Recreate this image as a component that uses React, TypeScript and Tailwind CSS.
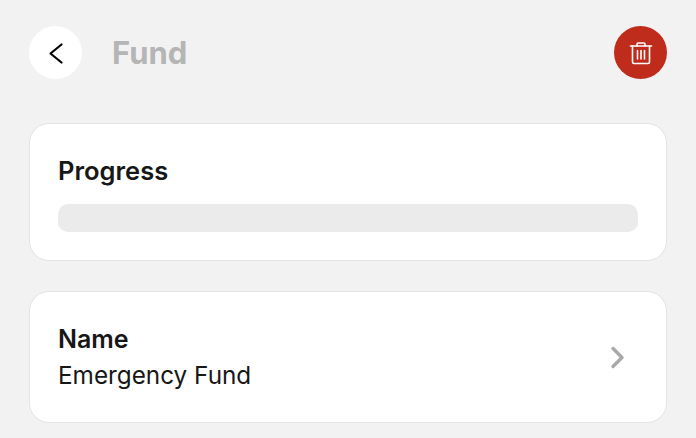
export default function App() {
  return (
    <div className="h-[438px] w-[696px] overflow-hidden bg-[#f2f2f2] px-[29px] pt-[26px] font-['Inter',sans-serif] text-[#171717]">
      <header className="flex h-[53px] items-center">
        <button className="flex h-[53px] w-[53px] items-center justify-center rounded-full bg-white">
          <svg width="32" height="32" viewBox="0 0 32 32" fill="none" stroke="#000" strokeWidth="2.2" strokeLinecap="round" strokeLinejoin="round">
            <path d="M21.5 7.5 L10.5 16.5 L21.5 25.5" />
          </svg>
        </button>
        <h1 className="mt-[2px] ml-[30px] flex-1 text-[31px] font-bold text-[#b5b5b5]">Fund</h1>
        <button className="flex h-[53px] w-[53px] items-center justify-center rounded-full bg-[#c02c1c]">
          <svg width="24" height="24" viewBox="0 0 24 24" fill="none" stroke="#fff" strokeWidth="1.6" strokeLinecap="round" strokeLinejoin="round">
            <path d="M1.5 5 H22.5" />
            <path d="M8 5 V3.2 Q8 2 9.2 2 H14.8 Q16 2 16 3.2 V5" />
            <path d="M3.5 5 V21 Q3.5 22.5 5 22.5 H19 Q20.5 22.5 20.5 21 V5" />
            <path d="M8.5 9.5 V18 M12 9.5 V18 M15.5 9.5 V18" />
          </svg>
        </button>
      </header>

      <section className="mt-[44px] h-[138px] rounded-[20px] border border-[#e4e4e4] bg-white px-[28px] pt-[32px]">
        <h2 className="text-[25.5px] leading-[30px] font-semibold">Progress</h2>
        <div className="mt-[18px] h-[28px] rounded-[10px] bg-[#ebebeb]" />
      </section>

      <section className="mt-[30px] flex h-[132px] items-center justify-between rounded-[20px] border border-[#e4e4e4] bg-white pr-[40px] pl-[28px]">
        <div className="pt-[2px]">
          <h2 className="text-[25px] leading-[34px] font-semibold">Name</h2>
          <p className="text-[24.3px] leading-[38px]">Emergency Fund</p>
        </div>
        <svg width="16" height="24" viewBox="0 0 16 24" fill="none" stroke="#a8a8a8" strokeWidth="3.4" strokeLinecap="round" strokeLinejoin="round">
          <path d="M3 3.5 L12 12.5 L3 21.5" />
        </svg>
      </section>
    </div>
  );
}
